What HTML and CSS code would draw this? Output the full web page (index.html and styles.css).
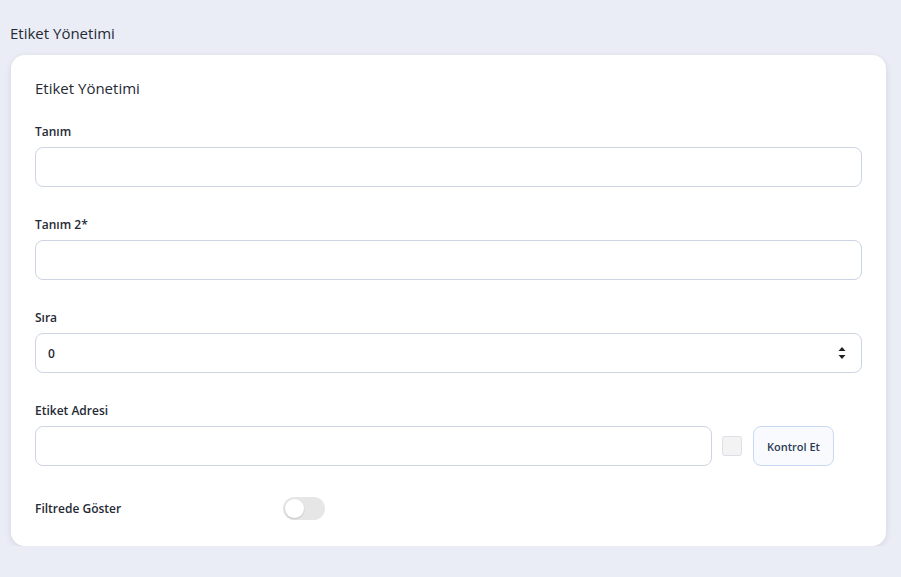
FILE: index.html
```html
<!DOCTYPE html>
<html lang="tr">
<head>
  <meta charset="UTF-8">
  <title>Etiket Yönetimi</title>
  <link rel="stylesheet" href="styles.css">
</head>
<body>
  <h1 class="page-title">Etiket Yönetimi</h1>

  <div class="card">
    <h2 class="card-title">Etiket Yönetimi</h2>

    <form class="form" onsubmit="return false;">
      <div class="field">
        <label for="tanim">Tanım</label>
        <input type="text" id="tanim" class="input">
      </div>

      <div class="field">
        <label for="tanim2">Tanım 2*</label>
        <input type="text" id="tanim2" class="input">
      </div>

      <div class="field">
        <label for="sira">Sıra</label>
        <div class="number-box">
          <input type="text" id="sira" class="input" value="0">
          <span class="spinner">
            <svg width="8" height="14" viewBox="0 0 8 14"><path d="M4 1 L7.5 5 L0.5 5 Z" fill="#222"/><path d="M0.5 9 L7.5 9 L4 13 Z" fill="#222"/></svg>
          </span>
        </div>
      </div>

      <div class="field">
        <label for="adres">Etiket Adresi</label>
        <div class="adres-row">
          <input type="text" id="adres" class="input">
          <span class="check"></span>
          <button type="button" class="btn-check">Kontrol Et</button>
        </div>
      </div>

      <div class="toggle-row">
        <span class="toggle-label">Filtrede Göster</span>
        <span class="toggle"><span class="knob"></span></span>
      </div>
    </form>
  </div>
</body>
</html>
```

FILE: styles.css
```css
body { margin: 0; background: #eaedf5; font-family: "Open Sans", "Noto Sans", sans-serif; color: #262a35; }
.page-title { font-size: 15px; font-weight: 500; margin: 0; padding: 24px 0 13px 10px; line-height: 18px; }
.card { background: #fff; margin: 0 15px 0 11px; border-radius: 14px; padding: 24px 24px 26px 24px; box-shadow: 0 2px 6px rgba(40, 50, 80, 0.12); }
.card-title { font-size: 15px; font-weight: 500; margin: 0 0 27px 0; line-height: 18px; }
.form { display: flex; flex-direction: column; }
.field { display: flex; flex-direction: column; margin-bottom: 30px; }
.field label { font-size: 12px; font-weight: 600; line-height: 16px; margin-bottom: 7px; color: #262a35; }
.input { height: 40px; box-sizing: border-box; border: 1px solid #cdd5e2; border-radius: 8px; padding: 0 12px; font-size: 12px; font-weight: 600; font-family: inherit; color: #262a35; outline: none; width: 100%; }
.number-box { position: relative; }
.spinner { position: absolute; right: 16px; top: 13px; line-height: 0; }
.adres-row { display: flex; align-items: center; padding-right: 28px; }
.adres-row .input { flex: 1; }
.check { width: 20px; height: 20px; box-sizing: border-box; border: 1px solid #dcdfe5; background: #f3f3f4; border-radius: 3px; margin: 0 11px 0 10px; }
.btn-check { height: 40px; width: 81px; border: 1px solid #c9d9f5; background: #f8fafd; border-radius: 8px; font-family: inherit; font-size: 11px; font-weight: 600; color: #2b3a55; padding: 0; }
.toggle-row { display: flex; align-items: center; height: 24px; }
.toggle-label { font-size: 12px; font-weight: 600; width: 248px; }
.toggle { width: 42px; height: 23px; border-radius: 12px; background: #e6e6e6; position: relative; }
.knob { position: absolute; left: 2px; top: 2px; width: 19px; height: 19px; border-radius: 50%; background: #fff; box-shadow: 0 1px 2px rgba(0, 0, 0, 0.15); }
```
